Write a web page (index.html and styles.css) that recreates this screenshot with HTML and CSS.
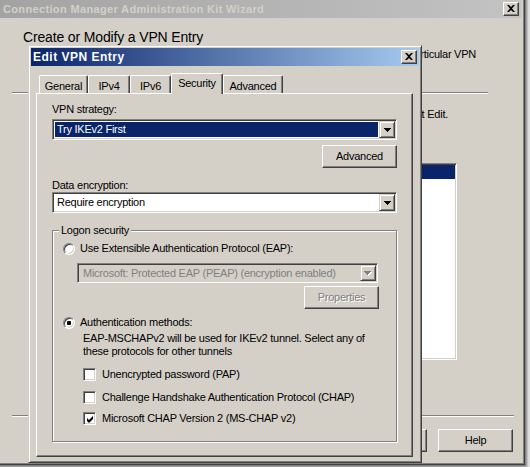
FILE: index.html
```html
<!DOCTYPE html>
<html>
<head>
<meta charset="utf-8">
<title>Edit VPN Entry</title>
<link rel="stylesheet" href="styles.css">
</head>
<body>
<div class="window">
  <div class="titlebar titlebar-inactive">
    <span class="title">Connection Manager Administration Kit Wizard</span>
    <span class="capbtn"><svg width="8" height="7" viewBox="0 0 8 7"><path d="M0 0h2l2 2 2-2h2L5 3.5 8 7H6L4 5 2 7H0l3-3.5z"/></svg></span>
  </div>
  <div class="wizard">
    <h1 class="heading">Create or Modify a VPN Entry</h1>
    <p class="desc">Specify the VPN settings for a particular VPN</p>
    <div class="sep sep-top"></div>
    <p class="desc desc-edit">To modify an entry, click it and then select Edit.</p>
    <div class="listbox">
      <div class="listrow">Corporate VPN</div>
    </div>
    <div class="sep sep-bottom"></div>
    <div class="wbuttons">
      <button class="btn">Cancel</button>
      <button class="btn">Help</button>
    </div>
  </div>
</div>

<div class="dialog">
  <div class="titlebar titlebar-active">
    <span class="title">Edit VPN Entry</span>
    <span class="capbtn"><svg width="8" height="7" viewBox="0 0 8 7"><path d="M0 0h2l2 2 2-2h2L5 3.5 8 7H6L4 5 2 7H0l3-3.5z"/></svg></span>
  </div>
  <div class="tabs">
    <div class="tab t-general">General</div>
    <div class="tab t-ipv4">IPv4</div>
    <div class="tab t-ipv6">IPv6</div>
    <div class="tab t-security selected">Security</div>
    <div class="tab t-advanced">Advanced</div>
  </div>
  <div class="panel">
    <div class="field-label">VPN strategy:</div>
    <div class="combo">
      <div class="combo-field"><div class="value sel">Try IKEv2 First</div></div>
      <span class="dropbtn"><svg width="7" height="4" viewBox="0 0 7 4"><path d="M0 0h7v1h-1v1h-1v1h-1v1h-1v-1h-1v-1h-1v-1h-1z"/></svg></span>
    </div>
    <div class="btnrow"><button class="btn">Advanced</button></div>
    <div class="field-label l-data">Data encryption:</div>
    <div class="combo">
      <div class="combo-field"><div class="value">Require encryption</div></div>
      <span class="dropbtn"><svg width="7" height="4" viewBox="0 0 7 4"><path d="M0 0h7v1h-1v1h-1v1h-1v1h-1v-1h-1v-1h-1v-1h-1z"/></svg></span>
    </div>
    <fieldset class="group">
      <legend>Logon security</legend>
      <div class="opt r-eap"><span class="radio"></span><span>Use Extensible Authentication Protocol (EAP):</span></div>
      <div class="combo combo-disabled">
        <div class="combo-field"><div class="value">Microsoft: Protected EAP (PEAP) (encryption enabled)</div></div>
        <span class="dropbtn"><svg width="8" height="5" viewBox="0 0 8 5"><path fill="#fff" d="M1 1h7v1h-1v1h-1v1h-1v1h-1v-1h-1v-1h-1v-1h-1z"/><path fill="#808080" d="M0 0h7v1h-1v1h-1v1h-1v1h-1v-1h-1v-1h-1v-1h-1z"/></svg></span>
      </div>
      <button class="btn btn-disabled b-props">Properties</button>
      <div class="opt r-auth"><span class="radio"><span class="dot"></span></span><span>Authentication methods:</span></div>
      <p class="note">EAP-MSCHAPv2 will be used for IKEv2 tunnel. Select any of<br>these protocols for other tunnels</p>
      <div class="check c1"><span class="cbox"></span><span>Unencrypted password (PAP)</span></div>
      <div class="check c2"><span class="cbox"></span><span>Challenge Handshake Authentication Protocol (CHAP)</span></div>
      <div class="check c3"><span class="cbox"><svg width="7" height="7" viewBox="0 0 7 7"><path d="M0 2l2 2 4-4v3L2 7 0 5z"/></svg></span><span>Microsoft CHAP Version 2 (MS-CHAP v2)</span></div>
    </fieldset>
  </div>
</div>
</body>
</html>
```
FILE: styles.css
```css
* { box-sizing: border-box; }
html, body { margin: 0; padding: 0; }
body {
  width: 530px;
  height: 467px;
  overflow: hidden;
  position: relative;
  background: #e2e2e2;
  font-family: "Liberation Sans", Arial, sans-serif;
  font-size: 11px;
  line-height: 13px;
  letter-spacing: -0.25px;
  color: #000;
}
p { margin: 0; }

/* outer wizard window */
.window {
  margin: -4px 0 0 -4px;
  width: 529px;
  height: 469px;
  background: #d4d0c8;
  border: 1px solid;
  border-color: #d4d0c8 #404040 #404040 #d4d0c8;
  box-shadow: inset 1px 1px 0 #fff, inset -1px -1px 0 #808080, 2px 2px 2px rgba(0,0,0,0.45);
  padding: 3px;
}
.titlebar {
  height: 18px;
  display: flex;
  align-items: center;
  justify-content: space-between;
  padding: 0 2px 0 3px;
  font-weight: bold;
}
.titlebar-inactive {
  background: linear-gradient(90deg, #a3a3a3, #c3c3c3);
  color: #d4d0c8;
  letter-spacing: 0.35px;
}
.titlebar-active {
  background: linear-gradient(90deg, #0a246a, #a6caf0);
  color: #fff;
  padding-left: 2px;
  font-size: 12px;
  letter-spacing: 0.5px;
}
.capbtn {
  width: 16px;
  height: 14px;
  background: #d4d0c8;
  border: 1px solid;
  border-color: #fff #404040 #404040 #fff;
  box-shadow: inset -1px -1px 0 #808080;
  display: flex;
  align-items: center;
  justify-content: center;
  padding: 0 1px 1px 0;
}
.capbtn svg { display: block; }

.wizard { padding-top: 11px; }
.heading {
  margin: 0 0 0 23px;
  font-size: 14px;
  line-height: 17px;
  font-weight: normal;
  letter-spacing: -0.15px;
}
.desc {
  margin-top: 2px;
  width: 476px;
  text-align: right;
  white-space: nowrap;
}
.sep {
  height: 2px;
  margin-left: 12px;
  border-top: 1px solid #808080;
  border-bottom: 1px solid #fff;
}
.sep-top { margin-top: 31px; width: 476px; }
.desc-edit { margin-top: 14px; width: 448px; }
.listbox {
  margin: 42px 0 0 60px;
  width: 397px;
  height: 197px;
  background: #fff;
  border: 1px solid;
  border-color: #808080 #fff #fff #808080;
  box-shadow: inset 1px 1px 0 #404040, inset -1px -1px 0 #d4d0c8;
  padding: 1px;
}
.listrow {
  height: 14px;
  background: #0a246a;
  color: #fff;
  padding-left: 2px;
}
.sep-bottom { margin-top: 55px; width: 502px; }
.wbuttons {
  margin: 12px 0 0 352px;
  display: flex;
  gap: 11px;
}

/* buttons */
.btn {
  width: 75px;
  height: 23px;
  padding: 0;
  margin: 0;
  font: inherit;
  letter-spacing: inherit;
  color: #000;
  background: #d4d0c8;
  border: 1px solid;
  border-color: #fff #404040 #404040 #fff;
  box-shadow: inset -1px -1px 0 #808080;
  text-align: center;
}
.btn-disabled {
  color: #808080;
  text-shadow: 1px 1px 0 #fff;
}

/* dialog */
.dialog {
  position: absolute;
  left: 28px;
  top: 45px;
  width: 394px;
  height: 418px;
  background: #d4d0c8;
  border: 1px solid;
  border-color: #d4d0c8 #404040 #404040 #d4d0c8;
  box-shadow: inset 1px 1px 0 #fff, inset -1px -1px 0 #808080;
  padding: 2px;
}
.tabs {
  display: flex;
  align-items: flex-end;
  height: 20px;
  margin: 7px 0 0 5px;
  padding-left: 3px;
}
.tab {
  height: 18px;
  padding-top: 4px;
  text-align: center;
  border-top: 1px solid #fff;
  border-left: 1px solid #fff;
  border-right: 1px solid #404040;
  box-shadow: inset -1px 0 0 #808080;
  border-radius: 2px 2px 0 0;
  background: #d4d0c8;
}
.tab.selected {
  height: 21px;
  margin-bottom: -1px;
  padding-top: 3px;
  position: relative;
  z-index: 1;
}
.t-general { width: 49px; }
.t-ipv4 { width: 42px; }
.t-ipv6 { width: 41px; }
.t-security { width: 52px; }
.t-advanced { width: 60px; }

.panel {
  margin-left: 5px;
  width: 377px;
  height: 364px;
  border: 1px solid;
  border-color: #fff #404040 #404040 #fff;
  box-shadow: inset -1px -1px 0 #808080;
  padding: 9px 0 0 15px;
}
.field-label { height: 13px; }
.l-data { margin-top: 11px; }

.combo {
  margin-top: 3px;
  width: 345px;
  height: 21px;
  display: flex;
  background: #fff;
  border: 1px solid;
  border-color: #808080 #fff #fff #808080;
  box-shadow: inset 1px 1px 0 #404040, inset -1px -1px 0 #d4d0c8;
  padding: 1px;
}
.l-data + .combo { margin-top: 0; }
.combo-field {
  flex: 1;
  padding: 1px;
  min-width: 0;
}
.value {
  height: 100%;
  padding: 1px 0 0 2px;
  white-space: nowrap;
  overflow: hidden;
}
.value.sel {
  background: #0a246a;
  color: #fff;
}
.dropbtn {
  width: 16px;
  flex: none;
  background: #d4d0c8;
  border: 1px solid;
  border-color: #d4d0c8 #404040 #404040 #d4d0c8;
  box-shadow: inset 1px 1px 0 #fff, inset -1px -1px 0 #808080;
  display: flex;
  align-items: center;
  justify-content: center;
  padding: 1px 0 0 0;
}
.dropbtn svg { display: block; }

.btnrow {
  margin-top: 5px;
  width: 345px;
  display: flex;
  justify-content: flex-end;
}

/* group box */
.group {
  margin: 11px 0 0;
  padding: 0 0 0 10px;
  width: 345px;
  height: 218px;
  min-width: 0;
  border: 1px solid #808080;
  box-shadow: inset 1px 1px 0 #fff, 1px 1px 0 #fff;
}
.group legend {
  padding: 0 2px;
  margin-left: -4px;
  line-height: 13px;
  background: #d4d0c8;
}
.opt {
  display: flex;
  align-items: center;
  height: 13px;
  gap: 5px;
}
.r-eap { margin-top: 5px; }
.r-auth { margin-top: 7px; }
.radio {
  width: 12px;
  height: 12px;
  flex: none;
  border-radius: 50%;
  background: #fff;
  border: 1px solid;
  border-color: #808080 #fff #fff #808080;
  box-shadow: inset 1px 1px 0 #404040, inset -1px -1px 0 #d4d0c8;
  display: flex;
  align-items: center;
  justify-content: center;
}
.dot {
  width: 4px;
  height: 4px;
  border-radius: 1px;
  background: #000;
}
.combo-disabled {
  margin: 8px 0 0 14px;
  width: 301px;
  height: 20px;
  background: #d4d0c8;
  color: #808080;
}
.combo-disabled .value { padding-left: 3px; padding-top: 1px; }
.b-props {
  display: block;
  margin: 3px 0 0 241px;
}
.note {
  margin: 3px 0 0 20px;
}
.check {
  display: flex;
  align-items: center;
  height: 13px;
  gap: 6px;
  margin-left: 20px;
}
.c1 { margin-top: 10px; }
.c2 { margin-top: 10px; }
.c3 { margin-top: 8px; }
.cbox {
  width: 13px;
  height: 13px;
  flex: none;
  background: #fff;
  border: 1px solid;
  border-color: #808080 #fff #fff #808080;
  box-shadow: inset 1px 1px 0 #404040, inset -1px -1px 0 #d4d0c8;
  display: flex;
  align-items: center;
  justify-content: center;
  padding: 1px 0 0 1px;
}
.cbox svg { display: block; }
```
